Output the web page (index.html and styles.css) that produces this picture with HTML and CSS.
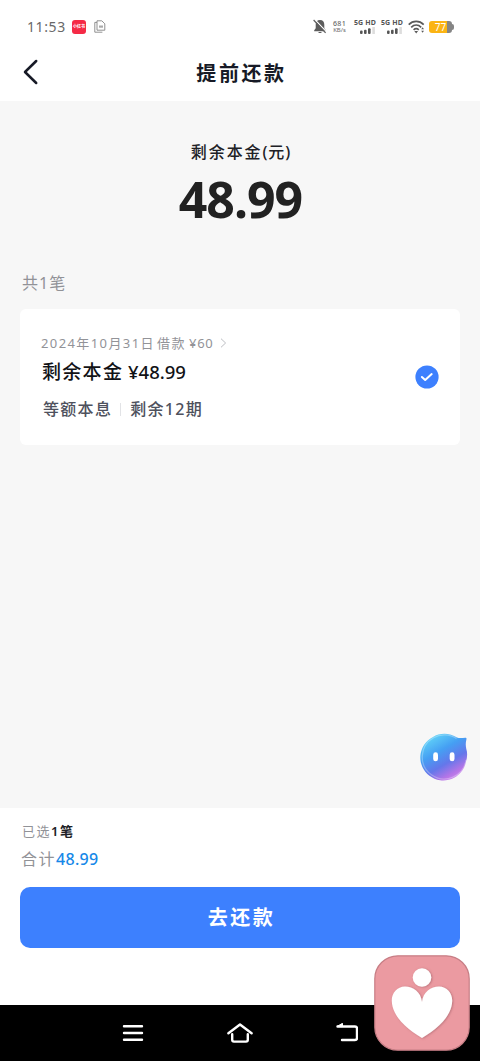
FILE: index.html
```html
<!DOCTYPE html>
<html lang="zh-CN">
<head>
<meta charset="utf-8">
<title>提前还款</title>
<link rel="stylesheet" href="styles.css">
</head>
<body>
<div class="screen">
  <header class="top">
    <div class="status">
      <span class="clock">11:53</span>
      <span class="app-badge">小红书</span>
      <svg class="docs" width="12" height="13" viewBox="0 0 12 13" fill="none" stroke="#858585" stroke-width=".9"><path d="M3 .8h4.800l3 3v6.400H3zM3 2.400H.8v9.800h7.600"/><path d="M5 5.500h4v2.200H5z" fill="#aaa" stroke="none"/></svg>
      <div class="status-right">
        <svg class="bell" width="14" height="15" viewBox="0 0 14 15"><path d="M7 1.100c-2.900 0-4.300 2-4.300 4.600v3.500L1.200 11.300v.9h11.600v-.9l-1.500-2.100V5.700C11.300 3.100 9.900 1.100 7 1.100zM5.200 13h3.600c-.3 1.300-3.300 1.300-3.600 0z" fill="#5c5c5c"/><path d="M1.600.4l12 12.500" stroke="#fff" stroke-width="1.300"/><path d="M.6 1l12 12.800" stroke="#5c5c5c" stroke-width="1.200"/></svg>
        <div class="speed"><b>681</b><span>KB/s</span></div>
        <div class="sim"><b>5G HD</b><svg width="17" height="7" viewBox="0 0 17 7"><g fill="#555"><rect x="1" y="3.500" width="2.600" height="3.500" rx="1"/><rect x="5" y="2.700" width="2.600" height="4.300" rx="1"/><rect x="9" y="1.300" width="2.600" height="5.700" rx="1"/></g><path d="M13.300 0h2.600v7h-2.600z" fill="#ddd"/></svg></div>
        <div class="sim"><b>5G HD</b><svg width="17" height="7" viewBox="0 0 17 7"><g fill="#555"><rect x="1" y="3.500" width="2.600" height="3.500" rx="1"/><rect x="5" y="2.700" width="2.600" height="4.300" rx="1"/><rect x="9" y="1.300" width="2.600" height="5.700" rx="1"/></g><path d="M13.300 0h2.600v7h-2.600z" fill="#ddd"/></svg></div>
        <svg class="wifi" width="17" height="14" viewBox="0 0 17 14" fill="none" stroke="#5a5a5a" stroke-width="1.700"><path d="M.7 4.600c4.300-4.200 10.700-4.200 15 0M3.200 7.300c3-2.900 7-2.900 10 0M5.600 9.800c1.600-1.500 3.600-1.500 5.200 0"/><path d="M6.300 11h3.800l-1.900 2.400z" fill="#5a5a5a" stroke="none"/><path d="M14.600 7.300l1.400 2h-2.800zM13.200 10.700H16l-1.400 2z" fill="#5a5a5a" stroke="none"/></svg>
        <div class="battery"><span>77</span><i></i></div>
      </div>
    </div>
    <nav class="navbar">
      <svg class="back" width="16" height="26" viewBox="0 0 16 26" fill="none" stroke="#171a26" stroke-width="2.500" stroke-linecap="round" stroke-linejoin="round"><path d="M13.200 2L2 13l11.200 11"/></svg>
      <h1>提前还款</h1>
    </nav>
  </header>

  <main class="content">
    <p class="balance-label">剩余本金<span class="unit">(元)</span></p>
    <p class="balance">48.99</p>
    <p class="count">共<span class="num">1</span>笔</p>
    <section class="card">
      <div class="card-info">
        <p class="loan"><span class="date">2024年10月31日</span><span class="borrow">借款</span><span class="yen">¥60</span><svg width="7" height="10" viewBox="0 0 7 10" fill="none" stroke="#bcbec3" stroke-width="1"><path d="M1 .7l4.600 4.300L1 9.300"/></svg></p>
        <p class="principal"><span class="principal-label">剩余本金</span><span class="amount">¥48.99</span></p>
        <p class="terms"><span>等额本息</span><i></i><span class="left">剩余<span class="num">12</span>期</span></p>
      </div>
      <svg class="check" width="24" height="24" viewBox="0 0 24 24"><circle cx="12" cy="12" r="11.600" fill="#3d80fe"/><path d="M6.900 12l3.300 3 6.500-5.900" fill="none" stroke="#fff" stroke-width="2" stroke-linecap="round" stroke-linejoin="round"/></svg>
    </section>
  </main>

  <footer class="pay">
    <p class="selected">已选<b><span class="num">1</span>笔</b></p>
    <p class="total">合计<b>48.99</b></p>
    <button class="submit">去还款</button>
  </footer>

  <div class="system">
    <svg width="22" height="20" viewBox="0 0 22 20" stroke="#fff" stroke-width="2.400" stroke-linecap="round"><path d="M2 3.200h18M2 10h18M2 16.800h18"/></svg>
    <svg width="26" height="20" viewBox="0 0 26 20" fill="none" stroke="#fff" stroke-width="2.400" stroke-linecap="round" stroke-linejoin="round"><path d="M1.400 10.300L13 1.500l11.600 8.800M5.200 11.300v5.500q0 1.800 1.800 1.800h12q1.800 0 1.800-1.800v-5.500"/></svg>
    <svg width="22" height="20" viewBox="0 0 22 20" fill="none" stroke="#fff" stroke-width="2.400" stroke-linecap="round" stroke-linejoin="round"><path d="M1.500 3.500h17.500q2 0 2 2v9.500q0 2-2 2H6"/><path d="M1.500 3.200L6.500.3v3z" fill="#fff" stroke-width="1"/></svg>
  </div>

  <svg class="assistant" width="50" height="50" viewBox="0 0 50 50">
    <defs>
      <linearGradient id="bubble" x1=".2" y1=".05" x2=".76" y2="1"><stop offset="0" stop-color="#62d5f8"/><stop offset=".35" stop-color="#459ff3"/><stop offset=".62" stop-color="#6477ea"/><stop offset=".85" stop-color="#b575e7"/><stop offset="1" stop-color="#d18cee"/></linearGradient>
    </defs>
    <path d="M37 6.600c3 1 5.600.2 8.300.1 1.300 0 1.400.8 1 2.200-.7 3-.7 5.600-.1 8.500 1.300 4 1.300 9-.3 13.500A23 23 0 1 1 13 5.900C20 1.500 30 1.700 37 6.600z" fill="url(#bubble)"/>
    <path d="M46 29A22 22 0 1 1 13.500 6.700C20 2.700 30 2.800 36.500 7.500" fill="none" stroke="#fff" stroke-width="1.300" stroke-opacity=".28"/>
    <rect x="13.200" y="21.300" width="4.800" height="9" rx="2.400" fill="#fff"/><rect x="29.700" y="21.300" width="4.800" height="9" rx="2.400" fill="#fff"/>
  </svg>

  <svg class="heart" width="96" height="96" viewBox="0 0 96 96">
    <defs><filter id="soft" x="-20%" y="-20%" width="140%" height="140%"><feDropShadow dx="1" dy=".5" stdDeviation="1.200" flood-color="#995860" flood-opacity=".6"/></filter></defs>
    <rect x=".8" y=".8" width="94.400" height="94.400" rx="23" fill="#eb9aa1" stroke="#c77e85" stroke-width="1.200"/>
    <g fill="#fff" filter="url(#soft)"><circle cx="48" cy="22.500" r="9.300"/><path d="M48 47C47 37 39 31.500 31 31.500c-8 0-13.500 7-13.200 14.500C18.300 61 32 73.500 48 83c16-9.500 29.700-22 30.200-37C78.500 38.500 73 31.500 65 31.500c-8 0-16 5.500-17 15.500z"/></g>
  </svg>
</div>
</body>
</html>
```

FILE: styles.css
```css
* { box-sizing: border-box; }
body { margin: 0; }
p, h1 { margin: 0; white-space: nowrap; }
.screen {
  position: relative;
  width: 480px;
  height: 1061px;
  overflow: hidden;
  display: flex;
  flex-direction: column;
  background: #f7f7f7;
  font-family: "Noto Sans", "Noto Sans CJK SC", sans-serif;
  color: #202126;
}
.top { height: 101px; background: #fff; }
.status { display: flex; align-items: center; height: 44px; padding: 9px 26px 0 27px; color: #686868; }
.clock { width: 45px; font-size: 14px; line-height: 18px; letter-spacing: .6px; }
.app-badge {
  width: 14px; height: 14px; border-radius: 3px;
  background: #f52a46; color: #fff;
  font-size: 4px; line-height: 14px; font-weight: 700; text-align: center;
}
.docs { margin-left: 8px; }
.status-right { display: flex; align-items: center; margin-left: auto; }
.bell { margin-right: -1px; }
.speed { width: 15px; margin-left: 6px; display: flex; flex-direction: column; align-items: center; font-size: 6px; line-height: 7px; }
.speed b { font-size: 7px; font-weight: 500; letter-spacing: .3px; }
.sim { width: 22px; margin-left: 7px; display: flex; flex-direction: column; align-items: flex-end; }
.sim + .sim { margin-left: 5px; }
.sim b { width: 22px; font-size: 7px; line-height: 8px; color: #555; white-space: nowrap; letter-spacing: .1px; }
.wifi { margin-left: 5px; }
.battery { display: flex; align-items: center; width: 25px; margin-left: 4px; }
.battery span {
  width: 23px; height: 12px; border-radius: 3px;
  background: linear-gradient(90deg, #fbb414 77%, #858585 77%);
  color: #fff; font-size: 10px; line-height: 12px; text-align: center;
}
.battery i { width: 2px; height: 6px; border-radius: 0 2px 2px 0; background: #858585; }
.navbar { display: grid; grid-template-columns: 40px 1fr 40px; align-items: center; height: 56px; }
.back { margin-left: 23px; }
.navbar h1 { font-size: 20px; line-height: 28px; letter-spacing: 2.6px; text-align: center; color: #171a26; padding: 3px 0 0 3px; }
.content { flex: 1; padding: 38px 20px 0; }
.balance-label { text-align: center; font-size: 16px; line-height: 26px; letter-spacing: 1.9px; font-weight: 500; padding-left: 2px; }
.unit { letter-spacing: .9px; }
.balance { text-align: center; font-size: 50px; line-height: 60px; font-weight: 700; letter-spacing: -1px; margin-top: 4px; padding-left: 1px; color: #222; }
.count { margin: 42px 0 0 2px; font-size: 16px; line-height: 24px; color: #919297; letter-spacing: 1px; }
.card {
  display: flex; justify-content: space-between;
  height: 136px; margin-top: 14px; padding: 22px 21px 0 21px;
  border-radius: 6px; background: #fff;
}
.loan { display: flex; align-items: center; font-size: 13px; line-height: 24px; color: #929398; }
.date { width: 116px; letter-spacing: 1.4px; }
.borrow { letter-spacing: 1.5px; width: 32px; }
.yen { width: 31px; letter-spacing: .7px; }
.principal { display: flex; height: 34px; align-items: center; font-size: 19px; line-height: 28px; font-weight: 500; color: #111216; padding-left: 1px; }
.principal-label { width: 86px; letter-spacing: 1.3px; }
.amount { font-size: 18.5px; padding-bottom: 1px; }
.terms { display: flex; align-items: center; height: 40px; padding-left: 2px; font-size: 16px; line-height: 24px; font-weight: 500; letter-spacing: 1.3px; color: #4e515d; }
.terms i { width: 1px; height: 13px; margin: 0 9px 0 8px; background: #e2e3e6; }
.check { margin: 34px 0 0; }
.content .card { margin-bottom: 0; }
.count + .card { margin-top: 14px; }
.pay { height: 197px; padding: 12px 20px 0; background: #fff; color: #919297; }
.selected { padding-left: 2px; font-size: 13px; line-height: 22px; letter-spacing: 1.5px; }
.selected b { color: #202126; font-weight: 600; }
.total { padding: 3px 0 0 1px; font-size: 16px; line-height: 28px; letter-spacing: 1.5px; }
.total b { color: #1688e8; font-weight: 500; letter-spacing: .3px; }
.submit {
  display: block; width: 440px; height: 61px; margin-top: 14px; padding: 0 0 2px 3px;
  border: 0; border-radius: 10px; background: #3d80fe; color: #fff;
  font: 700 20px/28px "Noto Sans CJK SC", sans-serif; letter-spacing: 2.5px;
}
.system { display: flex; justify-content: space-between; height: 56px; padding: 18px 122px 0; background: #000; }
.assistant { position: absolute; left: 420px; top: 731px; }
.heart { position: absolute; left: 374px; top: 955px; }
```
